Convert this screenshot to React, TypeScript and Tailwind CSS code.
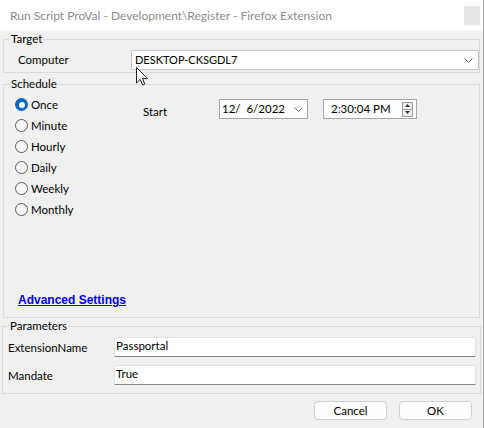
import React from "react";

function Radio({ label, checked }: { label: string; checked?: boolean }) {
  return (
    <div className="h-[21px] flex items-center">
      {checked ? (
        <div className="w-[13px] h-[13px] rounded-full bg-[#0067c0] flex items-center justify-center">
          <div className="w-[6px] h-[6px] rounded-full bg-white" />
        </div>
      ) : (
        <div className="w-[13px] h-[13px] rounded-full border border-[#5c5c5c] bg-[#f7f7f7]" />
      )}
      <span className="ml-[3px] text-[11.5px] leading-[16px] text-black">{label}</span>
    </div>
  );
}

function Chevron() {
  return (
    <svg width="9" height="5" viewBox="0 0 9 5" className="shrink-0">
      <path d="M0.5 0.5 L4.5 4.5 L8.5 0.5" fill="none" stroke="#606060" strokeWidth="1" />
    </svg>
  );
}

export default function App() {
  return (
    <div className="w-[484px] h-[428px] bg-[#f0f0f0] relative overflow-hidden border-r border-[#a8a8a8] flex flex-col font-['Lato',sans-serif] text-black">
      {/* Title bar */}
      <div className="h-[31px] shrink-0 bg-white flex items-center justify-between pl-[10px] pr-[3px]">
        <span className="text-[12px] leading-[16px] text-[#8c8c8c]">
          Run Script ProVal - Development\Register - Firefox Extension
        </span>
        <div className="w-[16px] h-[19px] bg-[#e6e6e6]" />
      </div>

      {/* Target */}
      <fieldset className="mx-[3px] border border-[#dadada] p-0 pb-[2px]">
        <legend className="ml-[6px] px-[1px] text-[11.5px] leading-[16px]">Target</legend>
        <div className="flex items-center mt-[3px]">
          <div className="w-[127px] pl-[14px] text-[11.5px] leading-[16px]">Computer</div>
          <div className="flex-1 h-[20px] bg-white border border-[#c4c4c4] rounded-[2px] flex items-center justify-between pl-[3px] pr-[5px]">
            <span className="text-[11px] leading-[16px]">DESKTOP-CKSGDL7</span>
            <Chevron />
          </div>
        </div>
      </fieldset>

      {/* Schedule */}
      <fieldset className="mx-[3px] mt-[3px] h-[242px] border border-[#dadada] p-0">
        <legend className="ml-[6px] px-[1px] text-[11.5px] leading-[16px]">Schedule</legend>
        <div className="flex flex-col h-[225px]">
          <div className="flex pt-[2px] pl-[11px]">
            <div className="w-[128px] flex flex-col">
              <Radio label="Once" checked />
              <Radio label="Minute" />
              <Radio label="Hourly" />
              <Radio label="Daily" />
              <Radio label="Weekly" />
              <Radio label="Monthly" />
            </div>
            <div className="flex items-start">
              <div className="w-[76px] mt-[10px] text-[11.5px] leading-[16px]">Start</div>
              <div className="mt-[5px] w-[89px] h-[20px] bg-white border border-[#a6a6a6] flex items-center justify-between pl-[2px] pr-[4px]">
                <span className="text-[11.5px] leading-[16px] whitespace-pre">12/  6/2022</span>
                <Chevron />
              </div>
              <div className="mt-[5px] ml-[15px] w-[94px] h-[20px] bg-white border border-[#a6a6a6] flex items-center justify-between pl-[7px] pr-[3px]">
                <span className="text-[11.5px] leading-[16px]">2:30:04 PM</span>
                <div className="flex flex-col w-[11px] h-[15px] border border-[#9a9a9a] bg-[#f2f2f2]">
                  <div className="flex-1 flex items-center justify-center border-b border-[#9a9a9a]">
                    <svg width="5" height="3" viewBox="0 0 5 3">
                      <path d="M0 3 L2.5 0 L5 3 Z" fill="#333" />
                    </svg>
                  </div>
                  <div className="flex-1 flex items-center justify-center">
                    <svg width="5" height="3" viewBox="0 0 5 3">
                      <path d="M0 0 L2.5 3 L5 0 Z" fill="#333" />
                    </svg>
                  </div>
                </div>
              </div>
            </div>
          </div>
          <div className="mt-auto pb-[7px] pl-[14px]">
            <span className="text-[12px] leading-[16px] font-bold font-['Liberation_Sans',sans-serif] text-[#0000f0] underline">
              Advanced Settings
            </span>
          </div>
        </div>
      </fieldset>

      {/* Parameters */}
      <fieldset className="mx-[2px] border border-[#dadada] p-0 pb-[8px]">
        <legend className="ml-[6px] px-[1px] text-[11.5px] leading-[16px]">Parameters</legend>
        <div className="flex flex-col gap-[8px] mt-[3px]">
          <div className="flex items-center">
            <div className="w-[111px] pl-[5px] text-[11.5px] leading-[16px] mt-[2px]">ExtensionName</div>
            <div className="flex-1 mr-[4px] h-[20px] bg-white border border-[#e3e3e3] border-b-[#8a8a8a] pl-[1px] flex items-center">
              <span className="text-[11.5px] leading-[16px] -mt-[2px]">Passportal</span>
            </div>
          </div>
          <div className="flex items-center">
            <div className="w-[111px] pl-[5px] text-[11.5px] leading-[16px] mt-[2px]">Mandate</div>
            <div className="flex-1 mr-[4px] h-[20px] bg-white border border-[#e3e3e3] border-b-[#8a8a8a] pl-[1px] flex items-center">
              <span className="text-[11.5px] leading-[16px] -mt-[2px]">True</span>
            </div>
          </div>
        </div>
      </fieldset>

      {/* Buttons */}
      <div className="flex justify-end gap-[12px] mt-[7px] pr-[11px]">
        <div className="w-[73px] h-[19px] bg-[#fdfdfd] border border-[#d0d0d0] rounded-[4px] flex items-center justify-center text-[11.5px] leading-[16px]">
          Cancel
        </div>
        <div className="w-[73px] h-[19px] bg-[#fdfdfd] border border-[#d0d0d0] rounded-[4px] flex items-center justify-center text-[11.5px] leading-[16px]">
          OK
        </div>
      </div>

      {/* Mouse cursor */}
      <svg className="absolute left-[136px] top-[67px]" width="12" height="19" viewBox="0 0 12 19">
        <path d="M0.5 0.5 L0.5 16 L4.2 12.4 L6.6 18 L8.8 17 L6.5 11.6 L11.5 11.6 Z" fill="white" stroke="#222" strokeWidth="1" strokeLinejoin="round" />
      </svg>
    </div>
  );
}
